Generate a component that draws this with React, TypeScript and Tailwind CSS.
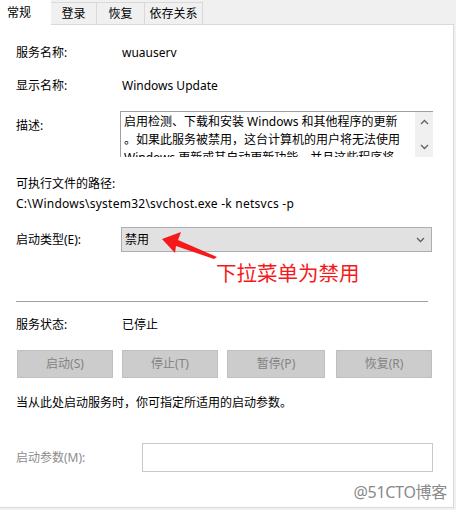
const font = { fontFamily: '"Noto Sans", "Noto Sans CJK SC", sans-serif' };

const tabs = [
  { t: "常规", w: "w-[51px]" },
  { t: "登录", w: "w-[46px]" },
  { t: "恢复", w: "w-[48px]" },
  { t: "依存关系", w: "w-[58px]" },
];

const descLines = [
  "启用检测、下载和安装 Windows 和其他程序的更新",
  "。如果此服务被禁用，这台计算机的用户将无法使用",
  "Windows 更新或其自动更新功能，并且这些程序将",
];

function Chevron({ up }: { up?: boolean }) {
  return (
    <svg width="9" height="6" viewBox="0 0 9 6" fill="none" stroke="#606060" strokeWidth="1.3">
      {up ? <path d="M1 5L4.5 1.5L8 5" /> : <path d="M1 1L4.5 4.5L8 1" />}
    </svg>
  );
}

function Row({ label, children, gray }: { label: string; children?: React.ReactNode; gray?: boolean }) {
  return (
    <div className="flex items-center h-5">
      <div className={"w-[106px] shrink-0 " + (gray ? "text-[#8c8c8c]" : "text-black")}>{label}</div>
      <div>{children}</div>
    </div>
  );
}

export default function App() {
  return (
    <div className="w-[456px] h-[510px] bg-[#f0f0f0] text-[12px] leading-5 relative overflow-hidden" style={font}>
      {/* tab strip */}
      <div className="flex h-6 items-end relative">
        {tabs.map(({ t, w }, i) =>
          i === 0 ? (
            <div key={t} className={w + " h-[25px] bg-white pl-[7px] pt-[3px] relative z-10 -mb-px"}>
              {t}
            </div>
          ) : (
            <div
              key={t}
              className={
                w +
                " h-[22px] pt-px text-center border border-b-0 border-l-0 border-[#d9d9d9] " +
                (i === 1 ? "border-l" : "")
              }
            >
              {t}
            </div>
          )
        )}
      </div>

      {/* panel */}
      <div className="w-[454px] h-[484px] bg-white border-t border-r border-b border-[#d9d9d9] pl-4 pr-[20px] relative">
        <div className="pt-[18px]">
          <Row label="服务名称:">wuauserv</Row>
        </div>
        <div className="mt-[13px]">
          <Row label="显示名称:">Windows Update</Row>
        </div>

        <div className="mt-[15px] flex">
          <div className="w-[104px] shrink-0 pt-[5px]">描述:</div>
          <div className="w-[313px] h-[46px] border-t border-l border-[#a0a0a0] flex overflow-hidden">
            <div className="flex-1 pl-[3px] pt-px leading-[18px] text-black overflow-hidden">
              {descLines.map((l) => (
                <div key={l} className="whitespace-nowrap">
                  {l}
                </div>
              ))}
            </div>
            <div className="w-[18px] bg-[#f0f0f0] flex flex-col items-center justify-between py-[7px]">
              <Chevron up />
              <Chevron />
            </div>
          </div>
        </div>

        <div className="mt-[17px]">可执行文件的路径:</div>
        <div className="tracking-[0.25px]">C:\Windows\system32\svchost.exe -k netsvcs -p</div>

        <div className="mt-[13px] flex items-center">
          <div className="w-[105px] shrink-0">启动类型(E):</div>
          <div className="w-[311px] h-[25px] bg-[#e1e1e1] border border-[#adadad] flex items-center justify-between pl-[3px] pr-[6px]">
            <span>禁用</span>
            <Chevron />
          </div>
        </div>

        <div className="h-[49px]" />
        <div className="w-[412px] h-px bg-[#a0a0a0]" />

        <div className="mt-[13px]">
          <Row label="服务状态:">已停止</Row>
        </div>

        <div className="mt-[15px] flex gap-[9px] w-[416px] pl-px">
          {["启动(S)", "停止(T)", "暂停(P)", "恢复(R)"].map((b, i) => (
            <div
              key={b}
              className={
                "h-[28px] bg-[#cccccc] border border-[#bfbfbf] text-[#838383] flex items-center justify-center " +
                (i === 2 ? "w-[98px]" : "w-[96px]") +
                (i === 3 ? " ml-[2px]" : "")
              }
            >
              {b}
            </div>
          ))}
        </div>

        <div className="mt-[15px]">当从此处启动服务时，你可指定所适用的启动参数。</div>

        <div className="mt-[30px] flex items-center">
          <div className="w-[126px] shrink-0 text-[#8c8c8c]">启动参数(M):</div>
          <div className="w-[291px] h-[29px] border border-[#c8c8c8] bg-white" />
        </div>

        <div className="absolute right-[6px] bottom-[5px] text-[16px] leading-5 text-[#8a8a8a] tracking-[-0.3px]">
          @51CTO博客
        </div>
      </div>

      {/* annotation overlay */}
      <svg className="absolute left-0 top-0 pointer-events-none" width="456" height="510">
        <path d="M162 239 L181 232 L178 240 L217 257 L214 259 L176 246 L175 253 Z" fill="#f5191b" />
      </svg>
      <div className="absolute left-[216px] top-[260px] text-[20.5px] leading-[26px] text-[#f5191b]">下拉菜单为禁用</div>
    </div>
  );
}
